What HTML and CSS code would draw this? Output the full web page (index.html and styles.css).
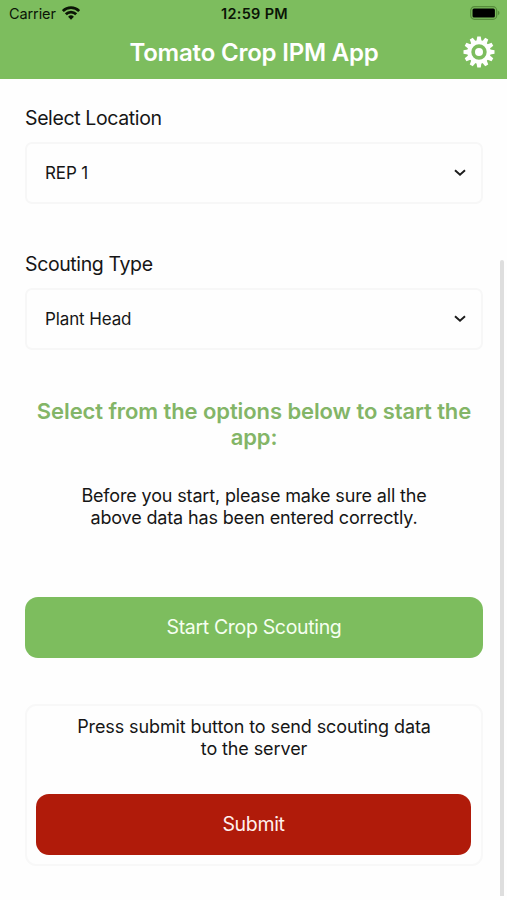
FILE: index.html
```html
<!DOCTYPE html>
<html lang="en">
<head>
<meta charset="utf-8">
<title>Tomato Crop IPM App</title>
<link rel="stylesheet" href="styles.css">
</head>
<body>
<header class="header">
  <div class="status">
    <div class="carrier"><span class="carrier-name">Carrier</span>
      <svg class="wifi" viewBox="0 0 18 14" width="18" height="14"><g fill="none" stroke="#0b1506" stroke-width="2.8"><path d="M.8 5.1a11.6 11.6 0 0 1 16.4 0"/><path d="M3.8 8.2a7.4 7.4 0 0 1 10.4 0"/></g><path d="M9 13.7l-2.9-2.9a4.1 4.1 0 0 1 5.8 0z" fill="#0b1506"/></svg>
    </div>
    <div class="clock"><span>12:59 PM</span></div>
    <svg class="battery" viewBox="0 0 31 14" width="31" height="14"><rect x="1.7" y=".7" width="26" height="12.6" rx="3.8" fill="none" stroke="#568c3b" stroke-width="1.2"/><rect x="3.5" y="2.5" width="22.4" height="9" rx="1.5" fill="#000"/><path d="M28.9 4.8q1.6.6 1.6 2.2t-1.6 2.2z" fill="#568c3b"/></svg>
  </div>
  <div class="titlebar">
    <h1 class="title"><span>Tomato Crop IPM App</span></h1>
    <svg class="gear" viewBox="-16 -16 32 32" width="32" height="32">
      <defs><path id="tooth" d="M-2.7-10L-1.7-15.5h3.4L2.7-10z"/></defs>
      <g fill="#fff"><use href="#tooth"/><use href="#tooth" transform="rotate(30)"/><use href="#tooth" transform="rotate(60)"/><use href="#tooth" transform="rotate(90)"/><use href="#tooth" transform="rotate(120)"/><use href="#tooth" transform="rotate(150)"/><use href="#tooth" transform="rotate(180)"/><use href="#tooth" transform="rotate(210)"/><use href="#tooth" transform="rotate(240)"/><use href="#tooth" transform="rotate(270)"/><use href="#tooth" transform="rotate(300)"/><use href="#tooth" transform="rotate(330)"/><circle r="4"/></g>
      <circle r="9.7" fill="none" stroke="#fff" stroke-width="4"/>
    </svg>
  </div>
</header>
<main class="content">
  <div class="field">
    <div class="label"><span>Select Location</span></div>
    <div class="select"><span>REP 1</span><svg viewBox="0 0 12 8" width="12" height="8"><path d="M1 1.2l5 4.6 5-4.6" fill="none" stroke="#1c1c1c" stroke-width="1.9"/></svg></div>
  </div>
  <div class="field">
    <div class="label"><span>Scouting Type</span></div>
    <div class="select"><span>Plant Head</span><svg viewBox="0 0 12 8" width="12" height="8"><path d="M1 1.2l5 4.6 5-4.6" fill="none" stroke="#1c1c1c" stroke-width="1.9"/></svg></div>
  </div>
  <h2 class="heading"><span>Select from the options below to start the</span><br><span>app:</span></h2>
  <p class="note"><span>Before you start, please make sure all the</span><br><span>above data has been entered correctly.</span></p>
  <div class="button start"><span>Start Crop Scouting</span></div>
  <section class="card">
    <p class="card-text"><span>Press submit button to send scouting data</span><br><span>to the server</span></p>
    <div class="button submit"><span>Submit</span></div>
  </section>
</main>
<div class="scrollbar"></div>
</body>
</html>
```

FILE: styles.css
```css
* { box-sizing: border-box; }
body { margin: 0; width: 507px; height: 900px; overflow: hidden; background: #fefefe; color: #161616; font-family: Inter, "Liberation Sans", sans-serif; }
h1, h2, p { margin: 0; }
svg { display: block; }
.header { height: 79px; background: #7dbd5e; }
.status { height: 27px; padding: 0 7px 0 9px; display: grid; grid-template-columns: 1fr auto 1fr; align-items: center; color: #0b1506; font-size: 14.5px; }
.carrier { display: flex; align-items: center; gap: 6px; letter-spacing: -.1px; }
.wifi { margin-top: -2px; }
.clock { font-weight: 600; font-size: 14.5px; letter-spacing: .3px; }
.battery { justify-self: end; margin-top: -1px; }
.titlebar { height: 50px; padding: 0 12px; display: grid; grid-template-columns: 1fr 32px; align-items: center; }
.title { padding: 2px 0 0 33px; color: #fff; font-size: 24px; font-weight: 600; line-height: 30px; text-align: center; white-space: nowrap; letter-spacing: -.2px; }
.content { padding: 26px 24px 0 25px; }
.field { height: 146px; }
.label { height: 26px; line-height: 26px; font-size: 19.5px; letter-spacing: -.38px; }
.select { height: 62px; margin-top: 11px; border: 2px solid #f7f7f7; border-radius: 7px; padding: 0 15px 0 18px; display: flex; align-items: center; justify-content: space-between; font-size: 17px; letter-spacing: -.12px; }
.heading { height: 85px; padding-top: 1px; font-size: 22px; line-height: 26px; font-weight: 600; letter-spacing: -.09px; color: #83b567; text-align: center; white-space: nowrap; }
.note { height: 115px; padding-top: 3px; font-size: 18px; line-height: 22px; letter-spacing: -.15px; text-align: center; }
.button { height: 61px; padding-bottom: 1px; border-radius: 13px; display: flex; align-items: center; justify-content: center; color: #f5fff0; font-size: 19.5px; letter-spacing: -.33px; }
.start { background: #7dbd5e; }
.submit { background: #b01b0a; color: #fff0ee; margin-left: -1px; }
.card { height: 162px; margin-top: 46px; padding: 10px; border: 2px solid #f8f8f8; border-radius: 11px; }
.card-text { height: 78px; font-size: 18px; line-height: 22px; letter-spacing: -.1px; text-align: center; }
.scrollbar { position: absolute; left: 500px; top: 260px; width: 3.5px; height: 636px; border-radius: 2px 2px 0 0; background: #dedede; }
```
